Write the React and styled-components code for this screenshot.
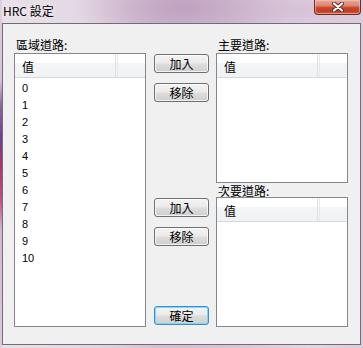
import React from 'react';
import styled, { createGlobalStyle } from 'styled-components';

const CJK = `"Noto Sans CJK TC", "Noto Sans CJK SC", "Noto Sans", sans-serif`;

const Global = createGlobalStyle`
  html, body { margin: 0; padding: 0; }
  body {
    width: 363px;
    height: 348px;
    overflow: hidden;
    font-family: ${CJK};
    background: #e0d4e0;
  }
`;

const Window = styled.div`
  width: 363px;
  height: 348px;
  box-sizing: border-box;
  padding: 0 2px 3px 2px;
  display: flex;
  flex-direction: column;
  background:
    linear-gradient(to bottom,
      #ddd0dd 0px, #d6c4d6 80px, #8d64a2 105px, #6b3f8e 140px,
      #b5306e 165px, #c25080 200px, #d2b8cc 230px, #dccbdb 348px) left top / 2px 100% no-repeat,
    radial-gradient(ellipse 110px 40px at 185px 8px, rgba(190, 158, 190, 0.9), rgba(190, 158, 190, 0) 100%),
    radial-gradient(ellipse 70px 30px at 300px 10px, rgba(210, 188, 212, 0.8), rgba(210, 188, 212, 0) 100%),
    linear-gradient(to right, #e9e1e9 0%, #e2d6e2 25%, #d3c0d3 45%, #d8c6d8 65%, #e4d6e4 85%, #dccbdc 100%);
`;

const TitleBar = styled.div`
  height: 23px;
  flex: none;
  display: flex;
  justify-content: space-between;
  align-items: flex-start;
`;

const Title = styled.div`
  margin-left: 1px;
  padding-top: 4px;
  font-family: ${CJK};
  font-size: 12px;
  line-height: 14px;
  color: #000;
  text-shadow: 0 0 6px rgba(255, 255, 255, 0.9);
`;

const CloseButton = styled.div`
  width: 47px;
  height: 15px;
  box-sizing: border-box;
  border: 1px solid #6b2c24;
  border-top: none;
  border-radius: 0 0 4px 4px;
  background: linear-gradient(to bottom, #e8aa9c 0%, #dd8571 40%, #c9472c 55%, #c13d22 80%, #d5633f 100%);
  box-shadow: inset 0 0 0 1px rgba(255, 200, 190, 0.55);
  display: flex;
  align-items: center;
  justify-content: center;
`;

const Client = styled.div`
  flex: 1;
  box-sizing: border-box;
  border: 1px solid #6f6e78;
  background: #f0f0f0;
  padding: 14px 12px 17px 11px;
  display: grid;
  grid-template-columns: 132px 1fr 132px;
`;

const Column = styled.div`
  display: flex;
  flex-direction: column;
  min-height: 0;
`;

const ButtonColumn = styled.div`
  display: flex;
  flex-direction: column;
  padding: 16px 7px 2px 8px;
`;

const Label = styled.div`
  font-family: ${CJK};
  font-size: 12px;
  line-height: ${p => (p.$tight ? '14px' : '14px')};
  height: ${p => (p.$tight ? '14px' : '14px')};
  padding-top: ${p => (p.$tight ? '1px' : '0')};
  box-sizing: border-box;
  margin-bottom: ${p => (p.$tight ? '0' : '1px')};
  padding-left: 2px;
  color: #000;
  white-space: nowrap;
`;

const ListBox = styled.div`
  box-sizing: border-box;
  border: 1px solid #828790;
  background: #fff;
  display: flex;
  flex-direction: column;
  overflow: hidden;
  ${p => (p.$h ? `height: ${p.$h}px; flex: none;` : 'flex: 1;')}
`;

const Header = styled.div`
  height: 24px;
  flex: none;
  box-sizing: border-box;
  border-bottom: 1px solid #d8d9db;
  display: flex;
  background: linear-gradient(to bottom, #ffffff 0px, #ffffff 9px, #f4f5f7 9px, #f1f2f4 100%);
`;

const HeaderCell = styled.div`
  box-sizing: border-box;
  font-family: ${CJK};
  font-size: 12px;
  line-height: 21px;
  padding-top: 2px;
  padding-left: 7px;
  color: #000;
  ${p =>
    p.$fill
      ? 'flex: 1; margin-left: 1px; border-left: 1px solid #e8e9eb;'
      : 'width: 101px; flex: none; border-right: 1px solid #dfe0e2;'}
`;

const Rows = styled.div`
  padding-top: 2px;
`;

const Row = styled.div`
  height: 17px;
  line-height: 17px;
  padding-left: 7px;
  font-family: "Liberation Sans", Arial, sans-serif;
  font-size: 11px;
  color: #000;
`;

const ButtonGroup = styled.div`
  display: flex;
  flex-direction: column;
  gap: 10px;
  margin-top: ${p => p.$top || 0}px;
`;

const Button = styled.button`
  width: 55px;
  height: 19px;
  box-sizing: border-box;
  padding: 0;
  margin: 0;
  border: 1px solid ${p => (p.$primary ? '#3590d6' : '#707070')};
  border-radius: 3px;
  background: linear-gradient(to bottom, #f3f3f3 0%, #ebebeb 48%, #dddddd 52%, #cfcfcf 100%);
  box-shadow: ${p => (p.$primary ? 'inset 0 0 0 1px #7dd6f8' : 'inset 0 0 0 1px rgba(255,255,255,0.7)')};
  font-family: ${CJK};
  font-size: 12px;
  line-height: 17px;
  color: #000;
  text-align: center;
  ${p => (p.$push ? 'margin-top: auto;' : '')}
`;

const CloseGlyph = () => (
  <svg width="14" height="10" viewBox="0 0 14 10">
    <path d="M3 1.5 L11 8.5 M11 1.5 L3 8.5" stroke="#4a2a28" strokeWidth="4" strokeLinecap="round" />
    <path d="M3 1.5 L11 8.5 M11 1.5 L3 8.5" stroke="#ffffff" strokeWidth="2.2" strokeLinecap="round" />
  </svg>
);

const ValueList = ({ items = [], height }) => (
  <ListBox $h={height}>
    <Header>
      <HeaderCell>值</HeaderCell>
      <HeaderCell $fill />
    </Header>
    <Rows>
      {items.map(v => (
        <Row key={v}>{v}</Row>
      ))}
    </Rows>
  </ListBox>
);

export default function App() {
  const items = ['0', '1', '2', '3', '4', '5', '6', '7', '8', '9', '10'];
  return (
    <>
      <Global />
      <Window>
        <TitleBar>
          <Title>HRC 設定</Title>
          <CloseButton>
            <CloseGlyph />
          </CloseButton>
        </TitleBar>
        <Client>
          <Column>
            <Label>區域道路:</Label>
            <ValueList items={items} />
          </Column>
          <ButtonColumn>
            <ButtonGroup>
              <Button>加入</Button>
              <Button>移除</Button>
            </ButtonGroup>
            <ButtonGroup $top={96}>
              <Button>加入</Button>
              <Button>移除</Button>
            </ButtonGroup>
            <Button $primary $push>確定</Button>
          </ButtonColumn>
          <Column>
            <Label>主要道路:</Label>
            <ValueList height={130} />
            <Label $tight>次要道路:</Label>
            <ValueList />
          </Column>
        </Client>
      </Window>
    </>
  );
}
